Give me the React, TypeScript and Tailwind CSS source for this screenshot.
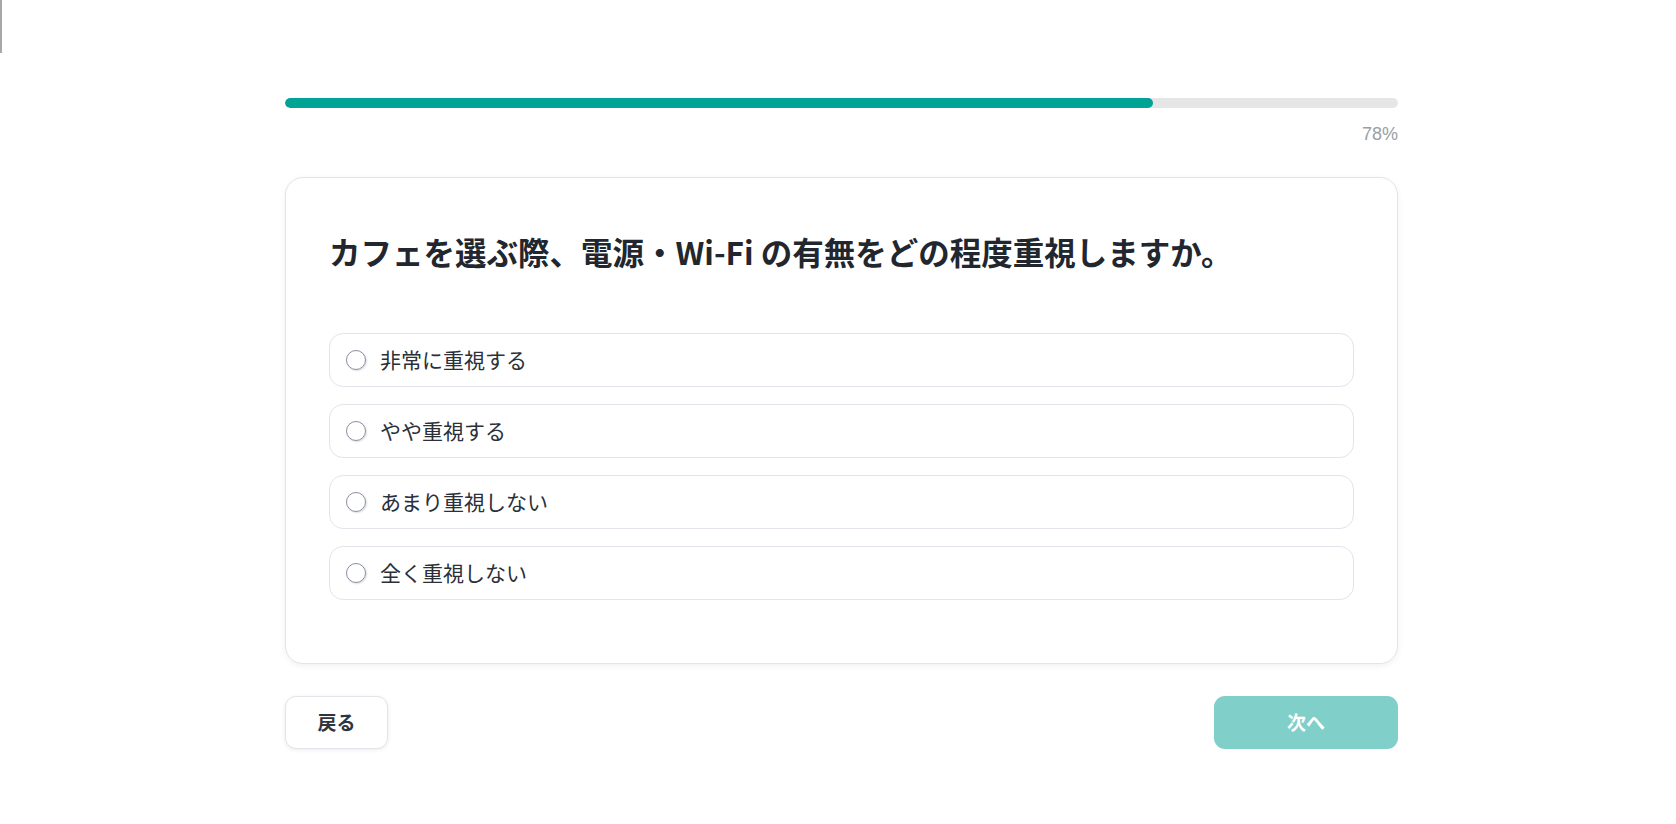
import React, { useState } from 'react';

const options = [
  '非常に重視する',
  'やや重視する',
  'あまり重視しない',
  '全く重視しない',
];

const progress = 78;

const jp = { fontFamily: '"Noto Sans CJK JP", "Noto Sans", sans-serif' };

const App: React.FC = () => {
  const [selected, setSelected] = useState<number | null>(null);

  return (
    <div className="relative min-h-screen bg-white pl-[7px]" style={jp}>
      {/* left edge marker */}
      <div className="absolute left-0 top-0 h-[53px] w-[2px] bg-[#a8a8a8]" />

      <div className="mx-auto w-[1113px] pt-[98px]">
        {/* progress */}
        <div className="h-[10px] w-full overflow-hidden rounded-full bg-[#e6e6e6]">
          <div className="h-full rounded-full bg-[#00a396]" style={{ width: `${progress}%` }} />
        </div>
        <div
          className="mt-[12px] text-right text-lg leading-7 text-[#9a9ea6]"
          style={{ fontFamily: '"Liberation Sans", Arial, sans-serif' }}
        >
          {progress}%
        </div>

        {/* question card */}
        <div className="mt-[29px] rounded-[18px] border border-[#e3e4ea] bg-white px-[43px] pt-[54px] pb-[63px] shadow-[0_2px_6px_rgba(0,0,0,0.06)]">
          <h2 className="text-[31.5px] font-bold leading-[38px] text-[#22262e]">
            カフェを選ぶ際、電源・Wi-Fi の有無をどの程度重視しますか。
          </h2>

          <div className="mt-[63px] flex flex-col gap-[17px]">
            {options.map((label, i) => (
              <label
                key={label}
                className="flex h-[54px] cursor-pointer items-center rounded-[14px] border border-[#e3e4ea] bg-white pl-4 pr-4"
                onClick={() => setSelected(i)}
              >
                <span
                  className={
                    selected === i
                      ? 'flex h-5 w-5 shrink-0 items-center justify-center rounded-full border-[1.5px] border-[#00a396]'
                      : 'flex h-5 w-5 shrink-0 items-center justify-center rounded-full border-[1.5px] border-[#878ea0] shadow-[1px_1px_2px_rgba(0,0,0,0.14)]'
                  }
                >
                  {selected === i && <span className="h-2.5 w-2.5 rounded-full bg-[#00a396]" />}
                </span>
                <span className="ml-[14px] text-[21px] font-normal text-[#2a2f38]">{label}</span>
              </label>
            ))}
          </div>
        </div>

        {/* navigation */}
        <div className="mt-8 flex items-center justify-between">
          <button className="flex h-[53px] w-[103px] items-center justify-center rounded-[11px] border border-[#e3e4ea] bg-white text-[19px] font-bold text-[#30343c] shadow-[0_1px_4px_rgba(0,0,0,0.08)]">
            戻る
          </button>
          <button
            disabled={selected === null}
            className="flex h-[53px] w-[184px] items-center justify-center rounded-[11px] bg-[#80cfc8] text-[19px] font-bold text-white"
          >
            次へ
          </button>
        </div>
      </div>
    </div>
  );
};

export default App;
